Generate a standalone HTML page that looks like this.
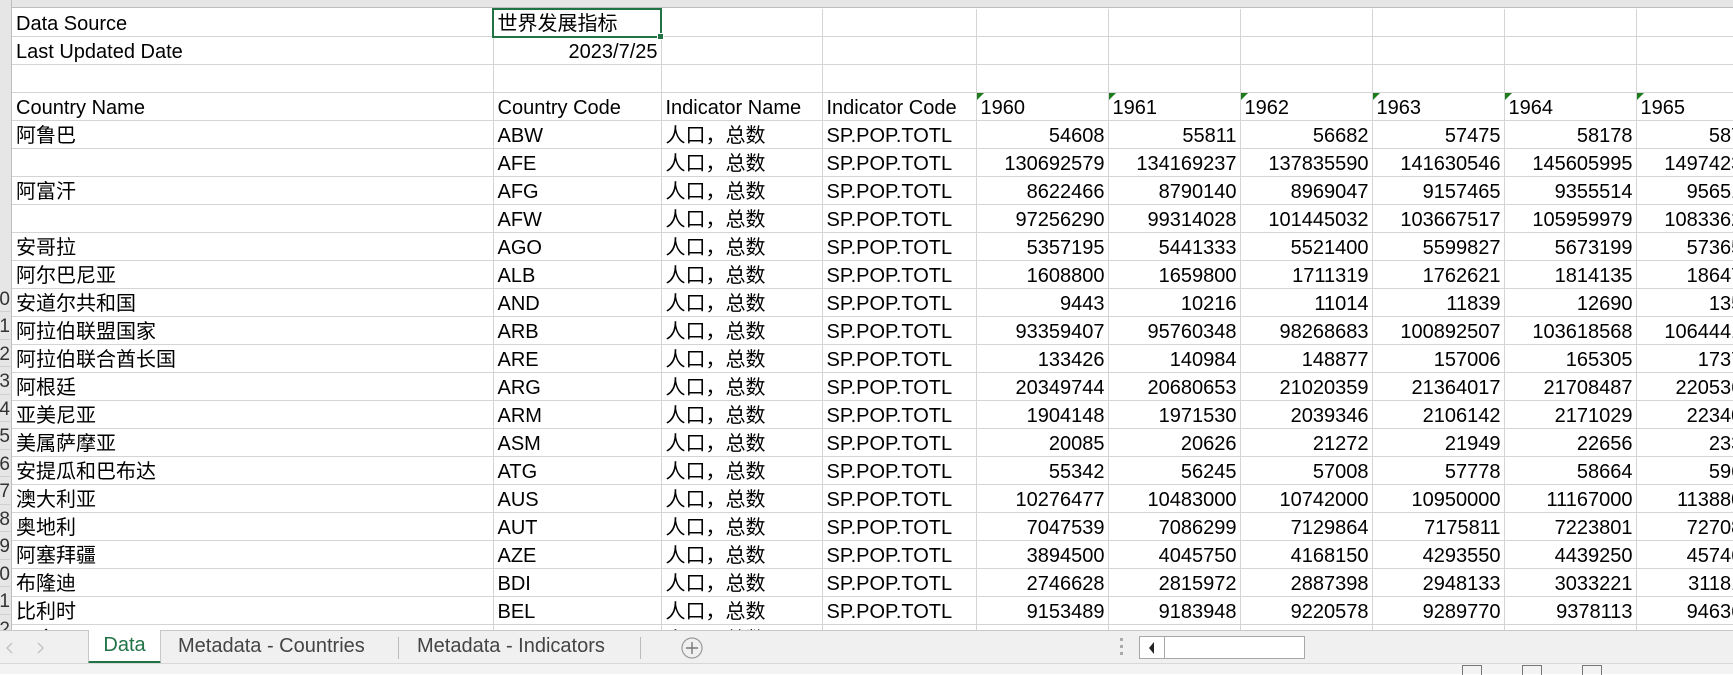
<!DOCTYPE html>
<html><head><meta charset="utf-8">
<style>
*{margin:0;padding:0;box-sizing:border-box}
body{width:1733px;height:674px;overflow:hidden;background:#fff;position:relative;font-family:"Liberation Sans","Noto Sans CJK SC",sans-serif;font-size:20px;color:#000}
#colhdr{position:absolute;left:0;top:0;width:1733px;height:8px;background:#e6e6e6;border-bottom:1px solid #bdbdbd}
#rowhdr{position:absolute;left:0;top:0;width:12px;height:630px;background:#e6e6e6;border-right:1px solid #bdbdbd;overflow:hidden}
#rowhdr div{position:absolute;left:-12px;width:22px;text-align:right;height:27.5px;line-height:30px;font-size:19px;color:#333;border-bottom:1px solid #d0d0d0}
#grid{position:absolute;left:12px;top:9px;width:1721px;height:621px;overflow:hidden}
table{border-collapse:collapse;table-layout:fixed;width:1756px}
tr{height:27.5px}
td{height:27.5px;border-right:1px solid #d4d4d4;border-bottom:1px solid #d4d4d4;padding:3px 4px 0 4px;line-height:24px;white-space:nowrap;overflow:hidden;vertical-align:bottom}
td.n{text-align:right;padding-right:3px}
td.y{position:relative}
td.y:before{content:"";position:absolute;left:0;top:0;border-top:7px solid #1e7b1e;border-right:7px solid transparent}
#sel{position:absolute;left:492px;top:8px;width:170px;height:30px;border:2px solid #217346}
#sel:after{content:"";position:absolute;right:-4px;bottom:-4px;width:5px;height:5px;background:#217346;border:1px solid #fff}
#tabs{position:absolute;left:0;top:630px;width:1733px;height:33px;background:#f0f0f0;border-top:1px solid #c8c8c8}
.tab{position:absolute;top:0;height:32px;line-height:30px;font-size:20px;color:#444}
#status{position:absolute;left:0;top:663px;width:1733px;height:11px;background:#f3f3f3;border-top:1px solid #d8d8d8}
</style></head><body>
<div id="colhdr"></div>
<div id="rowhdr">
<div style="top:284.5px">10</div><div style="top:312px">11</div><div style="top:339.5px">12</div><div style="top:367px">13</div><div style="top:394.5px">14</div><div style="top:422px">15</div><div style="top:449.5px">16</div><div style="top:477px">17</div><div style="top:504.5px">18</div><div style="top:532px">19</div><div style="top:559.5px">20</div><div style="top:587px">21</div><div style="top:614.5px">22</div>
</div>
<div id="grid">
<table>
<colgroup><col style="width:481px"><col style="width:168px"><col style="width:161px"><col style="width:154px"><col style="width:132px"><col style="width:132px"><col style="width:132px"><col style="width:132px"><col style="width:132px"><col style="width:132px"></colgroup>
<tr><td>Data Source</td><td>世界发展指标</td><td></td><td></td><td></td><td></td><td></td><td></td><td></td><td></td></tr>
<tr><td>Last Updated Date</td><td class="n">2023/7/25</td><td></td><td></td><td></td><td></td><td></td><td></td><td></td><td></td></tr>
<tr><td></td><td></td><td></td><td></td><td></td><td></td><td></td><td></td><td></td><td></td></tr>
<tr><td>Country Name</td><td>Country Code</td><td>Indicator Name</td><td>Indicator Code</td><td class="y">1960</td><td class="y">1961</td><td class="y">1962</td><td class="y">1963</td><td class="y">1964</td><td class="y">1965</td></tr>
<tr><td>阿鲁巴</td><td>ABW</td><td>人口，总数</td><td>SP.POP.TOTL</td><td class="n">54608</td><td class="n">55811</td><td class="n">56682</td><td class="n">57475</td><td class="n">58178</td><td class="n">58782</td></tr>
<tr><td></td><td>AFE</td><td>人口，总数</td><td>SP.POP.TOTL</td><td class="n">130692579</td><td class="n">134169237</td><td class="n">137835590</td><td class="n">141630546</td><td class="n">145605995</td><td class="n">149742351</td></tr>
<tr><td>阿富汗</td><td>AFG</td><td>人口，总数</td><td>SP.POP.TOTL</td><td class="n">8622466</td><td class="n">8790140</td><td class="n">8969047</td><td class="n">9157465</td><td class="n">9355514</td><td class="n">9565173</td></tr>
<tr><td></td><td>AFW</td><td>人口，总数</td><td>SP.POP.TOTL</td><td class="n">97256290</td><td class="n">99314028</td><td class="n">101445032</td><td class="n">103667517</td><td class="n">105959979</td><td class="n">108336203</td></tr>
<tr><td>安哥拉</td><td>AGO</td><td>人口，总数</td><td>SP.POP.TOTL</td><td class="n">5357195</td><td class="n">5441333</td><td class="n">5521400</td><td class="n">5599827</td><td class="n">5673199</td><td class="n">5736582</td></tr>
<tr><td>阿尔巴尼亚</td><td>ALB</td><td>人口，总数</td><td>SP.POP.TOTL</td><td class="n">1608800</td><td class="n">1659800</td><td class="n">1711319</td><td class="n">1762621</td><td class="n">1814135</td><td class="n">1864791</td></tr>
<tr><td>安道尔共和国</td><td>AND</td><td>人口，总数</td><td>SP.POP.TOTL</td><td class="n">9443</td><td class="n">10216</td><td class="n">11014</td><td class="n">11839</td><td class="n">12690</td><td class="n">13570</td></tr>
<tr><td>阿拉伯联盟国家</td><td>ARB</td><td>人口，总数</td><td>SP.POP.TOTL</td><td class="n">93359407</td><td class="n">95760348</td><td class="n">98268683</td><td class="n">100892507</td><td class="n">103618568</td><td class="n">106444103</td></tr>
<tr><td>阿拉伯联合酋长国</td><td>ARE</td><td>人口，总数</td><td>SP.POP.TOTL</td><td class="n">133426</td><td class="n">140984</td><td class="n">148877</td><td class="n">157006</td><td class="n">165305</td><td class="n">173742</td></tr>
<tr><td>阿根廷</td><td>ARG</td><td>人口，总数</td><td>SP.POP.TOTL</td><td class="n">20349744</td><td class="n">20680653</td><td class="n">21020359</td><td class="n">21364017</td><td class="n">21708487</td><td class="n">22053661</td></tr>
<tr><td>亚美尼亚</td><td>ARM</td><td>人口，总数</td><td>SP.POP.TOTL</td><td class="n">1904148</td><td class="n">1971530</td><td class="n">2039346</td><td class="n">2106142</td><td class="n">2171029</td><td class="n">2234036</td></tr>
<tr><td>美属萨摩亚</td><td>ASM</td><td>人口，总数</td><td>SP.POP.TOTL</td><td class="n">20085</td><td class="n">20626</td><td class="n">21272</td><td class="n">21949</td><td class="n">22656</td><td class="n">23345</td></tr>
<tr><td>安提瓜和巴布达</td><td>ATG</td><td>人口，总数</td><td>SP.POP.TOTL</td><td class="n">55342</td><td class="n">56245</td><td class="n">57008</td><td class="n">57778</td><td class="n">58664</td><td class="n">59610</td></tr>
<tr><td>澳大利亚</td><td>AUS</td><td>人口，总数</td><td>SP.POP.TOTL</td><td class="n">10276477</td><td class="n">10483000</td><td class="n">10742000</td><td class="n">10950000</td><td class="n">11167000</td><td class="n">11388000</td></tr>
<tr><td>奥地利</td><td>AUT</td><td>人口，总数</td><td>SP.POP.TOTL</td><td class="n">7047539</td><td class="n">7086299</td><td class="n">7129864</td><td class="n">7175811</td><td class="n">7223801</td><td class="n">7270889</td></tr>
<tr><td>阿塞拜疆</td><td>AZE</td><td>人口，总数</td><td>SP.POP.TOTL</td><td class="n">3894500</td><td class="n">4045750</td><td class="n">4168150</td><td class="n">4293550</td><td class="n">4439250</td><td class="n">4574600</td></tr>
<tr><td>布隆迪</td><td>BDI</td><td>人口，总数</td><td>SP.POP.TOTL</td><td class="n">2746628</td><td class="n">2815972</td><td class="n">2887398</td><td class="n">2948133</td><td class="n">3033221</td><td class="n">3118100</td></tr>
<tr><td>比利时</td><td>BEL</td><td>人口，总数</td><td>SP.POP.TOTL</td><td class="n">9153489</td><td class="n">9183948</td><td class="n">9220578</td><td class="n">9289770</td><td class="n">9378113</td><td class="n">9463667</td></tr>
<tr><td>巴拿马</td><td>BEN</td><td>人口，总数</td><td>SP.POP.TOTL</td><td class="n">2431617</td><td class="n">2465865</td><td class="n">2502897</td><td class="n">2542864</td><td class="n">2585961</td><td class="n">2632361</td></tr>
</table>
</div>
<div id="sel"></div>
<div id="tabs">
<svg style="position:absolute;left:5px;top:10px" width="40" height="14"><path d="M7 2 L2 7 L7 12" fill="none" stroke="#c4c4c4" stroke-width="1.5"/><path d="M33 2 L38 7 L33 12" fill="none" stroke="#c4c4c4" stroke-width="1.5"/></svg>
<div class="tab" style="left:88px;width:73px;background:#fff;color:#217346;text-align:center;border-left:1px solid #c8c8c8;border-right:1px solid #c8c8c8;border-bottom:3px solid #217346;top:-1px;height:34px">Data</div>
<div class="tab" style="left:178px">Metadata - Countries</div>
<div style="position:absolute;left:398px;top:6px;width:1px;height:22px;background:#bbb"></div>
<div class="tab" style="left:417px">Metadata - Indicators</div>
<div style="position:absolute;left:640px;top:6px;width:1px;height:22px;background:#bbb"></div>
<svg style="position:absolute;left:680px;top:5px" width="24" height="24"><circle cx="12" cy="12" r="10" fill="none" stroke="#999" stroke-width="1.2"/><path d="M12 6V18M6 12H18" stroke="#777" stroke-width="1.4"/></svg>
<div style="position:absolute;left:1120px;top:7px;width:3px;height:3px;background:#aaa;box-shadow:0 7px 0 #aaa,0 14px 0 #aaa"></div>
<div style="position:absolute;left:1139px;top:5px;width:166px;height:23px;background:#fff;border:1px solid #a8a8a8"></div>
<div style="position:absolute;left:1139px;top:5px;width:26px;height:23px;border:1px solid #a8a8a8;background:#fff"></div>
<svg style="position:absolute;left:1148px;top:10px" width="8" height="14"><path d="M6 1 L1 7 L6 13Z" fill="#222"/></svg>
</div>
<div id="status">
<div style="position:absolute;left:1462px;top:1px;width:20px;height:10px;border:1px solid #777;border-bottom:none"></div>
<div style="position:absolute;left:1522px;top:1px;width:20px;height:10px;border:1px solid #777;border-bottom:none"></div>
<div style="position:absolute;left:1582px;top:1px;width:20px;height:10px;border:1px solid #777;border-bottom:none"></div>
</div>
</body></html>
